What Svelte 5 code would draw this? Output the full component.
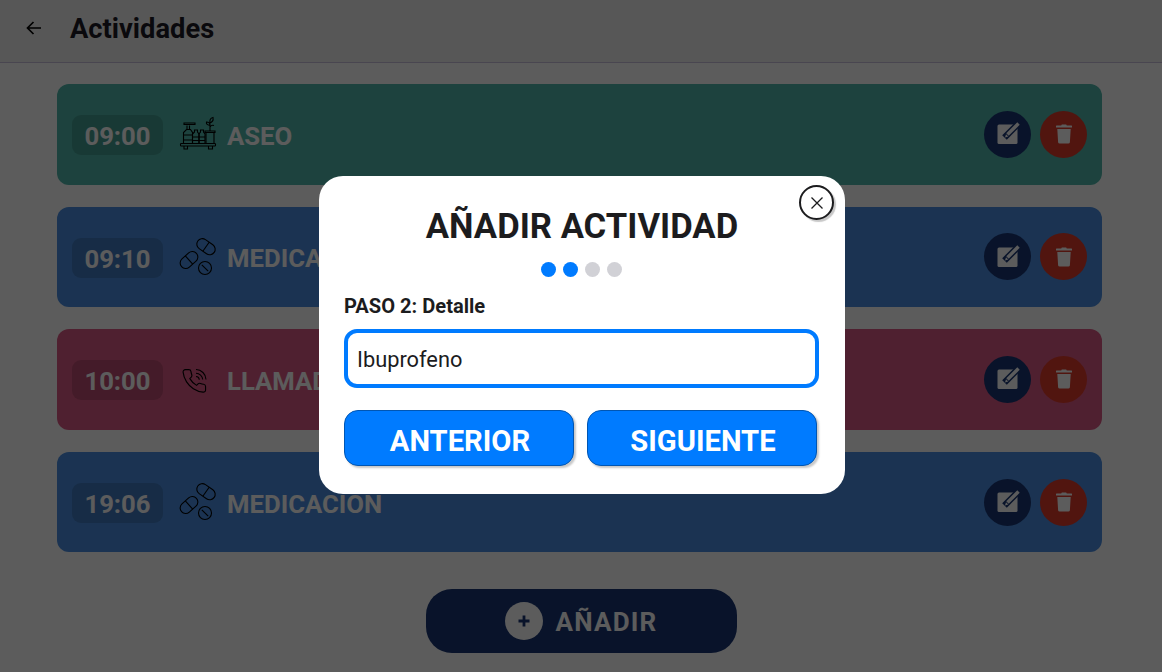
<script>
  const rows = [
    { time: '09:00', label: 'ASEO', tone: 'teal', icon: 'care' },
    { time: '09:10', label: 'MEDICACIÓN', tone: 'blue', icon: 'pills' },
    { time: '10:00', label: 'LLAMADA', tone: 'pink', icon: 'phone' },
    { time: '19:06', label: 'MEDICACIÓN', tone: 'blue', icon: 'pills' }
  ];
  const dots = [true, true, false, false];
</script>

<div class="page">
  <header class="top">
    <svg class="back" viewBox="0 0 24 24" width="24" height="24" aria-hidden="true">
      <path d="M19 12H5.500M11.500 6l-6 6 6 6" />
    </svg>
    <h1>Actividades</h1>
  </header>

  <main class="list">
    {#each rows as row}
      <article class="card {row.tone}">
        <span class="time">{row.time}</span>
        <svg class="kind" viewBox="0 0 40 40" width="40" height="40" aria-hidden="true">
          {#if row.icon === 'care'}
            <rect x="2.500" y="29.500" width="35" height="2.500" rx=".8" />
            <path d="M6 32v3h3.500v-3M30.500 32v3h4v-3" />
            <path d="M5.500 29.500v-11l3-3h4l2 3v11M5.500 21h9M5.500 26h9M9 15.500v-4M11.500 15.500v-4M6.500 10.500h10.500M6 9h11v1.500H6z" />
            <path d="M14.500 29.500v-9.500l2-2v-2h3v2l1.500 2v9.500M14.500 23h6.500M14.500 26.500h6.500" />
            <path d="M21 29.500v-9.500l1.500-2v-2h3v2l1.500 2v9.500M21 23h6M21 26.500h6" />
            <path d="M27 17h10v1.500H27zM28 18.500v11M36 18.500v11" />
            <path d="M32 17v-6M32 11c-2.500.5-4-1-3.500-3 2 0 3.500 1 3.500 3zM32 9c-.5-3 .5-5 3-5.500.5 2.500-.5 4.500-3 5.500zM32 13c1-1.500 2.500-2 4-1.500" />
          {:else if row.icon === 'pills'}
            <g transform="rotate(35 28 9.700)">
              <rect x="18" y="4.200" width="20" height="11" rx="5.500" />
              <path d="M28 4.200v11" />
            </g>
            <g transform="rotate(-42 11 23)">
              <rect x="1" y="17.500" width="20" height="11" rx="5.500" />
              <path d="M11 17.500v11" />
            </g>
            <circle cx="27" cy="31" r="6.500" />
            <path d="M23.800 27.800l6.400 6.400" />
          {:else}
            <g transform="translate(2.700 8.400) scale(1.130)">
              <path class="thin" d="M22 16.920v3a2 2 0 0 1-2.180 2 19.790 19.790 0 0 1-8.630-3.070 19.500 19.500 0 0 1-6-6 19.790 19.790 0 0 1-3.070-8.670A2 2 0 0 1 4.110 2h3a2 2 0 0 1 2 1.720 12.840 12.840 0 0 0 .7 2.810 2 2 0 0 1-.45 2.110L8.090 9.910a16 16 0 0 0 6 6l1.270-1.270a2 2 0 0 1 2.110-.45 12.840 12.840 0 0 0 2.810.7A2 2 0 0 1 22 16.92z" />
            </g>
            <path d="M18 17.500a3.500 3.500 0 0 1 3.300 3.300M18 14.200a6.800 6.800 0 0 1 6.700 6.300M18 10.500a10.300 10.300 0 0 1 10 10" />
          {/if}
        </svg>
        <span class="label">{row.label}</span>
        <div class="actions">
          <button class="round navy" aria-label="Editar">
            <svg viewBox="0 0 24 24" width="24" height="24" aria-hidden="true">
              <rect class="solid" x="1.500" y="2.500" width="20" height="19.500" rx="1.500" />
              <path class="gap" d="M8.500 15.500L24 0" />
              <path class="pen" d="M11.500 12.500L22.500 1.500" />
              <path class="solid" d="M9 15.500l1-3.300 2.300 2.300z" />
            </svg>
          </button>
          <button class="round red" aria-label="Borrar">
            <svg viewBox="0 0 24 24" width="24" height="24" aria-hidden="true">
              <path class="solid" d="M4.500 3.500h4.700l.6-1h4.400l.6 1h4.700a.5.5 0 0 1 .5.500v1.500H4V4a.5.5 0 0 1 .5-.5zM5.300 7h13.400l-.8 13.200a1.500 1.500 0 0 1-1.500 1.300H7.600a1.500 1.500 0 0 1-1.500-1.300z" />
            </svg>
          </button>
        </div>
      </article>
    {/each}
  </main>

  <footer class="foot">
    <button class="add">
      <span class="plus" aria-hidden="true">
        <svg viewBox="0 0 14 14" width="14" height="14"><path d="M7 1.500v11M1.500 7h11" /></svg>
      </span>
      <span class="add-text">AÑADIR</span>
    </button>
  </footer>
</div>

<div class="scrim">
  <section class="modal">
    <button class="close" aria-label="Cerrar">
      <svg viewBox="0 0 14 14" width="14" height="14"><path d="M1.500 1.500l11 11M12.500 1.500l-11 11" /></svg>
    </button>
    <h2>AÑADIR ACTIVIDAD</h2>
    <div class="dots">
      {#each dots as on}
        <span class="dot" class:on></span>
      {/each}
    </div>
    <p class="step">PASO 2: Detalle</p>
    <input class="field" value="Ibuprofeno" />
    <div class="nav">
      <button class="primary"><span class="primary-text">ANTERIOR</span></button>
      <button class="primary"><span class="primary-text">SIGUIENTE</span></button>
    </div>
  </section>
</div>

<style>
  :global(body) {
    margin: 0;
    font-family: Roboto, "Liberation Sans", sans-serif;
    background: #fff;
  }
  .page {
    height: 672px;
    overflow: hidden;
    display: flex;
    flex-direction: column;
    background: #fff;
  }
  .top {
    height: 62px;
    display: flex;
    align-items: center;
    padding-left: 22px;
    background: #f2f2f2;
    border-bottom: 1px solid #c9c2de;
  }
  .back { margin-right: 24px; margin-top: -6px; }
  .back path { fill: none; stroke: #000; stroke-width: 1.700; }
  h1 {
    margin: -4px 0 0;
    font-size: 27.300px;
    font-weight: 700;
    color: #1d1b26;
  }
  .list {
    display: flex;
    flex-direction: column;
    gap: 22px;
    padding: 21px 60px 0 57px;
  }
  .card {
    height: 100.600px;
    border-radius: 12px;
    display: flex;
    align-items: center;
    padding: 0 15px;
  }
  .teal { background: #50b8ab; }
  .blue { background: #4b8fe2; }
  .pink { background: #dc5a85; }
  .time {
    width: 91px;
    height: 40px;
    margin: 2px 15px 0 0;
    border-radius: 9px;
    background: rgba(0, 0, 0, .14);
    color: #fff;
    font-size: 25.700px;
    font-weight: 700;
    line-height: 42px;
    text-align: center;
  }
  .kind { margin-right: 9px; flex: none; overflow: visible; }
  .kind path, .kind rect, .kind circle {
    fill: none;
    stroke: #000;
    stroke-width: 1.100;
  }
  .kind .thin { stroke-width: 1; }
  .label {
    color: #fff;
    font-size: 25.700px;
    font-weight: 700;
    padding-top: 3px;
  }
  .actions {
    margin-left: auto;
    display: flex;
    gap: 9px;
  }
  .round {
    width: 47px;
    height: 47px;
    padding: 0;
    border: 0;
    border-radius: 50%;
    display: flex;
    align-items: center;
    justify-content: center;
  }
  .round svg { overflow: visible; }
  .navy { background: #1a3674; }
  .red { background: #e03a2a; }
  .solid { fill: #fff; }
  .gap { fill: none; stroke: #1a3674; stroke-width: 6.500; }
  .pen { fill: none; stroke: #fff; stroke-width: 3.400; }
  .foot {
    display: flex;
    justify-content: center;
    padding-top: 36.600px;
  }
  .add {
    width: 311px;
    height: 64px;
    border: 0;
    border-radius: 26px;
    background: #1a3674;
    color: #fff;
    font: 700 26px Roboto, sans-serif;
    letter-spacing: 1.200px;
    display: flex;
    align-items: center;
    justify-content: center;
    gap: 13px;
  }
  .add-text { padding-top: 2px; }
  .plus {
    width: 38px;
    height: 38px;
    border-radius: 50%;
    background: #fff;
    display: flex;
    align-items: center;
    justify-content: center;
  }
  .plus path { fill: none; stroke: #1a3674; stroke-width: 2.800; }
  .scrim {
    position: fixed;
    inset: 0;
    display: flex;
    align-items: center;
    justify-content: center;
    background: rgba(0, 0, 0, .64);
  }
  .modal {
    position: relative;
    width: 526px;
    height: 318px;
    box-sizing: border-box;
    margin: 0 0 2px 2px;
    padding: 30px 25px 0;
    border-radius: 24px;
    background: #fff;
    display: flex;
    flex-direction: column;
  }
  .close {
    position: absolute;
    top: 9px;
    right: 11px;
    width: 35px;
    height: 35px;
    padding: 0;
    border: 2px solid #1c1c1e;
    border-radius: 50%;
    background: #fff;
    box-shadow: 2px 2px 1px rgba(0, 0, 0, .22);
    display: flex;
    align-items: center;
    justify-content: center;
  }
  .close path { fill: none; stroke: #1c1c1e; stroke-width: 1.300; }
  h2 {
    margin: 0;
    text-align: center;
    font-size: 34.660px;
    line-height: 41px;
    font-weight: 700;
    color: #1c1c1e;
  }
  .dots {
    display: flex;
    justify-content: center;
    gap: 7px;
    margin: 15px 2px 0 0;
  }
  .dot {
    width: 15px;
    height: 15px;
    border-radius: 50%;
    background: #d1d1d6;
  }
  .dot.on { background: #007bff; }
  .step {
    margin: 17px 0 0;
    font-size: 20.100px;
    line-height: 24px;
    font-weight: 700;
    color: #1c1c1e;
  }
  .field {
    margin-top: 11px;
    width: 475px;
    height: 59px;
    box-sizing: border-box;
    padding: 2px 9px 0;
    border: 4px solid #007bff;
    border-radius: 13px;
    background: #fff;
    color: #1c1c1e;
    font: 400 21.800px Roboto, sans-serif;
    outline: none;
  }
  .nav {
    display: flex;
    gap: 13px;
    margin-top: 22px;
  }
  .primary {
    width: 230px;
    height: 56px;
    padding: 0 0 0 2px;
    border: 1px solid #0056b3;
    border-radius: 14px;
    background: #007bff;
    color: #fff;
    font: 700 29.200px Roboto, sans-serif;
    box-shadow: 2px 2px 2px rgba(0, 0, 0, .22);
  }
  .primary-text { display: block; padding-top: 5px; }
</style>
